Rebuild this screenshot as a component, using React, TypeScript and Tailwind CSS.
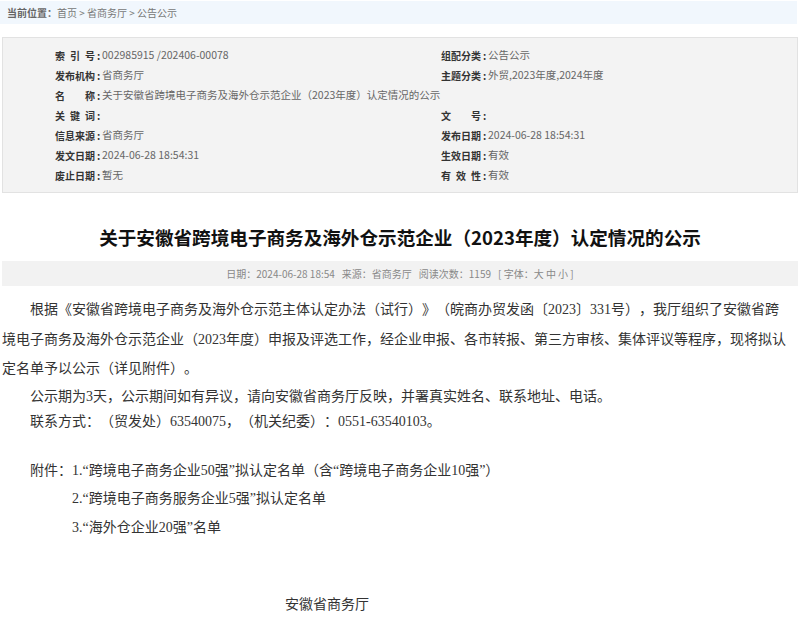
import React from "react";

const sans = { fontFamily: '"Noto Sans CJK SC", "Noto Sans", sans-serif' };

function Label({ text }: { text: string }) {
  return (
    <span className="inline-flex shrink-0 text-[10px] font-bold text-[#333]">
      <span className="inline-block w-[40px] text-justify [text-align-last:justify]">{text}</span>
      <span className="inline-block w-[7px] text-center">:</span>
    </span>
  );
}

function Field({ label, value }: { label: string; value: string }) {
  return (
    <div className="flex h-[20px] items-center whitespace-nowrap">
      <Label text={label} />
      <span className="text-[#666]">{value}</span>
    </div>
  );
}

export default function App() {
  return (
    <div className="w-[800px] bg-white [text-spacing-trim:space-all]" style={sans}>
      {/* breadcrumb */}
      <div className="mt-[1px] flex h-[23px] w-[797px] items-center bg-[#f1f7fd] pl-[7px] text-[10px] text-[#777]">
        <span className="font-bold text-[#666]">当前位置：</span>
        <span>首页 &gt; 省商务厅 &gt; 公告公示</span>
      </div>

      {/* info box */}
      <div className="mx-[2px] mt-[13px] w-[796px] border border-[#e2e2e2] bg-[#f3f3f3] py-[7px] text-[10.5px]">
        <div className="grid grid-cols-[386px_1fr] pl-[52px]">
          <Field label="索 引 号" value="002985915 /202406-00078" />
          <Field label="组配分类" value="公告公示" />
          <Field label="发布机构" value="省商务厅" />
          <Field label="主题分类" value="外贸,2023年度,2024年度" />
          <div className="col-span-2">
            <Field label="名称" value="关于安徽省跨境电子商务及海外仓示范企业（2023年度）认定情况的公示" />
          </div>
          <Field label="关 键 词" value="" />
          <Field label="文号" value="" />
          <Field label="信息来源" value="省商务厅" />
          <Field label="发布日期" value="2024-06-28 18:54:31" />
          <Field label="发文日期" value="2024-06-28 18:54:31" />
          <Field label="生效日期" value="有效" />
          <Field label="废止日期" value="暂无" />
          <Field label="有 效 性" value="有效" />
        </div>
      </div>

      {/* title */}
      <h1 className="mt-[30px] text-center text-[18.6px] font-bold leading-[28px] text-[#111]">
        关于安徽省跨境电子商务及海外仓示范企业（2023年度）认定情况的公示
      </h1>

      {/* meta */}
      <div className="mx-[2px] mt-[10px] flex h-[25px] w-[796px] items-center justify-center bg-[#f2f2f2] text-[10px] text-[#888]">
        <span>日期：2024-06-28 18:54</span>
        <span className="ml-[7px]">来源：省商务厅</span>
        <span className="ml-[7px]">阅读次数：1159</span>
        <span className="ml-[7px]">[ 字体：大 中 小 ]</span>
      </div>

      {/* body */}
      <div
        className="mt-[9px] w-[790px] pl-[2px] text-[14px] text-[#333]"
        style={{ fontFamily: '"Liberation Serif", "Noto Sans CJK SC", serif' }}
      >
        <p className="indent-[28px] leading-[29.5px]">
          根据《安徽省跨境电子商务及海外仓示范主体认定办法（试行）》（皖商办贸发函〔2023〕331号），我厅组织了安徽省跨境电子商务及海外仓示范企业（2023年度）申报及评选工作，经企业申报、各市转报、第三方审核、集体评议等程序，现将拟认定名单予以公示（详见附件）。
        </p>
        <p className="indent-[28px] leading-[25px]">
          公示期为3天，公示期间如有异议，请向安徽省商务厅反映，并署真实姓名、联系地址、电话。
        </p>
        <p className="indent-[28px] leading-[25px]">
          联系方式：（贸发处）63540075，（机关纪委）：0551-63540103。
        </p>
        <div className="mt-[23px] pl-[28px] leading-[28.5px]">
          <p>附件：1.“跨境电子商务企业50强”拟认定名单（含“跨境电子商务企业10强”）</p>
          <p className="pl-[42px]">2.“跨境电子商务服务企业5强”拟认定名单</p>
          <p className="pl-[42px]">3.“海外仓企业20强”名单</p>
        </div>
        <p className="mt-[49px] pl-[283px] leading-[28px]">安徽省商务厅</p>
      </div>
    </div>
  );
}
